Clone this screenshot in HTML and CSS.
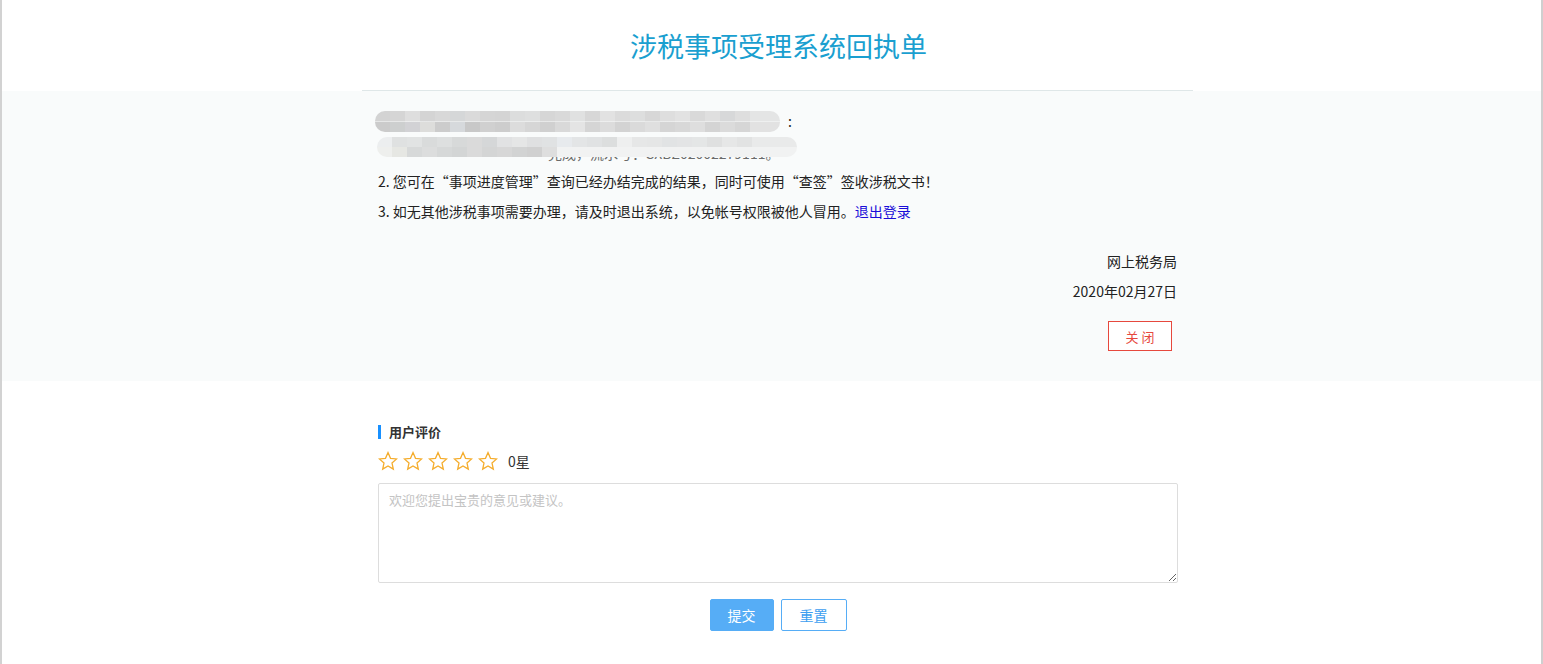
FILE: index.html
```html
<!DOCTYPE html>
<html lang="zh-CN">
<head>
<meta charset="utf-8">
<title>涉税事项受理系统回执单</title>
<link rel="stylesheet" href="styles.css">
</head>
<body>
<div class="page">
  <header class="head">
    <div class="wrap head-wrap">
      <h1 class="title">涉税事项受理系统回执单</h1>
    </div>
  </header>

  <section class="band">
    <div class="wrap">
      <div class="blur-row first">
        <span class="mosaic m1"></span><span class="colon">:</span>
      </div>
      <div class="blur-row second">
        <span class="mosaic m2"></span><span class="peek">完成，流水号：SXBZ02002279111。</span>
      </div>
      <p class="line">2. 您可在“事项进度管理”查询已经办结完成的结果，同时可使用“查签”签收涉税文书！</p>
      <p class="line">3. 如无其他涉税事项需要办理，请及时退出系统，以免帐号权限被他人冒用。<a class="logout" href="#">退出登录</a></p>
      <div class="sign">
        <p class="sign-line">网上税务局</p>
        <p class="sign-line">2020年02月27日</p>
        <button class="btn-close" type="button">关 闭</button>
      </div>
    </div>
  </section>

  <section class="rating">
    <div class="wrap">
      <h2 class="rate-title">用户评价</h2>
      <div class="stars">
        <svg class="star" viewBox="0 0 20 20"><polygon points="10,1.6 12.5,7.3 18.6,7.9 14,12 15.3,18.1 10,15 4.7,18.1 6,12 1.4,7.9 7.5,7.3"/></svg>
        <svg class="star" viewBox="0 0 20 20"><polygon points="10,1.6 12.5,7.3 18.6,7.9 14,12 15.3,18.1 10,15 4.7,18.1 6,12 1.4,7.9 7.5,7.3"/></svg>
        <svg class="star" viewBox="0 0 20 20"><polygon points="10,1.6 12.5,7.3 18.6,7.9 14,12 15.3,18.1 10,15 4.7,18.1 6,12 1.4,7.9 7.5,7.3"/></svg>
        <svg class="star" viewBox="0 0 20 20"><polygon points="10,1.6 12.5,7.3 18.6,7.9 14,12 15.3,18.1 10,15 4.7,18.1 6,12 1.4,7.9 7.5,7.3"/></svg>
        <svg class="star" viewBox="0 0 20 20"><polygon points="10,1.6 12.5,7.3 18.6,7.9 14,12 15.3,18.1 10,15 4.7,18.1 6,12 1.4,7.9 7.5,7.3"/></svg>
        <span class="score">0星</span>
      </div>
      <textarea class="advice" placeholder="欢迎您提出宝贵的意见或建议。"></textarea>
      <div class="actions">
        <button class="btn-submit" type="button">提交</button>
        <button class="btn-reset" type="button">重置</button>
      </div>
    </div>
  </section>
</div>
</body>
</html>
```

FILE: styles.css
```css
html, body {
  margin: 0;
  padding: 0;
  background: #fff;
}

body {
  font-family: "Noto Sans CJK SC", "Noto Sans", sans-serif;
  color: #222;
  font-size: 14px;
}

.page {
  min-height: 664px;
  border-left: 2px solid #d2d2d2;
  border-right: 2px solid #cfcfcf;
  box-sizing: border-box;
}

.wrap {
  width: 831px;
  margin-left: 360px;
  padding: 0 16px;
  box-sizing: border-box;
}

.head-wrap {
  height: 91px;
  border-bottom: 1px solid #dfe7e8;
  display: flex;
  align-items: center;
  justify-content: center;
}

.title {
  margin: 0;
  font-size: 27px;
  font-weight: 400;
  color: #1a9fd0;
  padding-left: 2px;
  padding-top: 1px;
}

.band {
  background: #f9fbfb;
  padding-bottom: 30px;
}

.blur-row {
  display: flex;
  align-items: center;
  position: relative;
}

.blur-row.first {
  padding-top: 20px;
  height: 21px;
}

.blur-row.second {
  margin-top: 5px;
  height: 24px;
}

.mosaic {
  display: block;
  border-radius: 10px;
  position: relative;
  z-index: 1;
}

.m1 {
  width: 405px;
  height: 21px;
  margin-left: -3px;
  background:
    linear-gradient(90deg, #d3d3d3 0 15px, #d5d5d5 15px 30px, #dedede 30px 45px, #d4d4d4 45px 60px, #d8d8d8 60px 75px, #d5d7d8 75px 90px, #dadada 90px 105px, #d5d5d5 105px 120px, #d4d4d4 120px 135px, #dcdddd 135px 150px, #dedfdf 150px 165px, #d6d6d6 165px 180px, #d9d9d9 180px 195px, #e0e1e1 195px 210px, #d7d7d7 210px 225px, #e2e2e2 225px 240px, #dbdbdb 240px 255px, #dddede 255px 270px, #d7d7d7 270px 285px, #dedede 285px 300px, #e2e2e2 300px 315px, #d9d9d9 315px 330px, #dfdfdf 330px 345px, #d7d8d9 345px 360px, #dedede 360px 375px, #e4e5e5 375px 405px) top / 100% 50% no-repeat,
    linear-gradient(90deg, #cbcbcb 0 15px, #cdcfcf 15px 30px, #d2d2d5 30px 45px, #dddddb 45px 60px, #cccccc 60px 75px, #d6d9dc 75px 90px, #c8c8c8 90px 105px, #d0d0d0 105px 120px, #cdcdcd 120px 135px, #dcdcdc 135px 150px, #d6d6d6 150px 165px, #d0d0d0 165px 180px, #d9d9d9 180px 195px, #e4e4e4 195px 210px, #d5d5d5 210px 225px, #dcdcdc 225px 240px, #d3d3d3 240px 255px, #dadada 255px 270px, #dfdfdf 270px 285px, #d5d5d5 285px 300px, #d8d8d8 300px 315px, #dedede 315px 330px, #d4d4d4 330px 345px, #dbdbdb 345px 360px, #d6d6d6 360px 375px, #e2e2e2 375px 405px) bottom / 100% 50% no-repeat;
}

.colon {
  margin-left: 8px;
  font-size: 14px;
  line-height: 21px;
}

.m2 {
  width: 420px;
  height: 20px;
  margin-left: -1px;
  align-self: flex-start;
  background:
    linear-gradient(90deg, #eceeef 0 15px, #dfe1e1 15px 30px, #e1e3e3 30px 45px, #d9dbdb 45px 60px, #dddfdf 60px 75px, #d7d9d9 75px 90px, #dadada 90px 105px, #d5d7d8 105px 120px, #e1e2e3 120px 135px, #e5e6e6 135px 150px, #dfe0e1 150px 165px, #e0e2e3 165px 180px, #e7eaed 180px 195px, #e3e5e6 195px 210px, #e0e2e3 210px 225px, #dcdede 225px 240px, #eeefef 240px 255px, #e6e7e7 255px 270px, #e5e6e6 270px 285px, #e1e3e4 285px 300px, #e3e4e5 300px 315px, #e4e6e6 315px 330px, #dfe0e0 330px 345px, #e6e7e7 345px 360px, #e2e3e3 360px 375px, #e9eaea 375px 420px) top / 100% 50% no-repeat,
    linear-gradient(90deg, #eeefed 0 15px, #e6e7e3 15px 30px, #d7d9d9 30px 45px, #dcdddd 45px 60px, #d6d8d8 60px 75px, #d3d5d5 75px 90px, #dadada 90px 105px, #d4d5d5 105px 120px, #d7d7d7 120px 135px, #d2d3d3 135px 150px, #d0d0d0 150px 165px, #dedede 165px 180px, #f1f2f2 180px 420px) bottom / 100% 50% no-repeat;
}

.peek {
  position: absolute;
  left: 170px;
  top: 9px;
  font-size: 14px;
  line-height: 15px;
  color: #6a6a6a;
  white-space: nowrap;
}

.line {
  margin: 0;
  line-height: 30px;
  font-size: 14px;
  white-space: nowrap;
}

.blur-row.second + .line {
  margin-top: 5px;
}

.logout {
  color: #1a0dd8;
  text-decoration: none;
}

.sign {
  margin-top: 20px;
  display: flex;
  flex-direction: column;
  align-items: flex-end;
}

.sign-line {
  margin: 0;
  line-height: 30px;
  font-size: 14px;
}

.btn-close {
  margin-top: 15px;
  margin-right: 5px;
  width: 64px;
  height: 30px;
  background: #fff;
  border: 1px solid #e6483d;
  color: #e6483d;
  font-family: "Noto Sans CJK SC", sans-serif;
  font-size: 13px;
  padding: 0;
  cursor: pointer;
}

.rating {
  padding-top: 41px;
  padding-bottom: 31px;
}

.rate-title {
  margin: 3px 0 3px;
  font-size: 13px;
  font-weight: 700;
  color: #333;
  border-left: 3px solid #1890ff;
  padding-left: 8px;
  height: 14px;
  line-height: 14px;
}

.stars {
  margin-top: 12px;
  display: flex;
  align-items: center;
  height: 20px;
}

.star {
  width: 20px;
  height: 20px;
  margin-right: 5px;
  fill: none;
  stroke: #f5ad2d;
  stroke-width: 1.3;
}

.score {
  margin-left: 5px;
  font-size: 14px;
  color: #333;
}

.advice {
  display: block;
  margin-top: 12px;
  width: 800px;
  height: 100px;
  box-sizing: border-box;
  border: 1px solid #dddddd;
  border-radius: 2px;
  padding: 6px 10px;
  font-family: "Noto Sans CJK SC", sans-serif;
  font-size: 13px;
  line-height: 20px;
  color: #333;
  background: #fff;
  outline: none;
}

.advice::placeholder {
  color: #c4c4c4;
}

.actions {
  margin-top: 16px;
  display: flex;
  justify-content: center;
  gap: 7px;
  padding-left: 1px;
}

.btn-submit,
.btn-reset {
  height: 32px;
  padding: 0;
  border-radius: 2px;
  font-family: "Noto Sans CJK SC", sans-serif;
  font-size: 14px;
  cursor: pointer;
}

.btn-submit {
  width: 64px;
  background: #56adf6;
  border: 1px solid #56adf6;
  color: #fff;
}

.btn-reset {
  width: 66px;
  background: #fff;
  border: 1px solid #56adf6;
  color: #3d9ef0;
}
```
